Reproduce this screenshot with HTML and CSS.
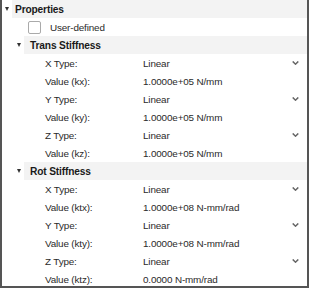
FILE: index.html
```html
<!DOCTYPE html>
<html lang="en">
<head>
    <meta charset="UTF-8">
    <title>Properties</title>
    <link rel="stylesheet" href="styles.css">
</head>
<body>
    <div class="panel">
        <div class="header level-0"><span class="caret"></span>Properties</div>
        <div class="row check-row"><span class="checkbox"></span>User-defined</div>

        <div class="header level-1"><span class="caret"></span>Trans Stiffness</div>
        <div class="row"><span class="label">X Type:</span><span class="value">Linear</span><svg class="chevron" viewBox="0 0 8 5"><path d="M0.5 0.5 L4 4 L7.5 0.5" /></svg></div>
        <div class="row"><span class="label">Value (kx):</span><span class="value">1.0000e+05 N/mm</span></div>
        <div class="row"><span class="label">Y Type:</span><span class="value">Linear</span><svg class="chevron" viewBox="0 0 8 5"><path d="M0.5 0.5 L4 4 L7.5 0.5" /></svg></div>
        <div class="row"><span class="label">Value (ky):</span><span class="value">1.0000e+05 N/mm</span></div>
        <div class="row"><span class="label">Z Type:</span><span class="value">Linear</span><svg class="chevron" viewBox="0 0 8 5"><path d="M0.5 0.5 L4 4 L7.5 0.5" /></svg></div>
        <div class="row"><span class="label">Value (kz):</span><span class="value">1.0000e+05 N/mm</span></div>

        <div class="header level-1"><span class="caret"></span>Rot Stiffness</div>
        <div class="row"><span class="label">X Type:</span><span class="value">Linear</span><svg class="chevron" viewBox="0 0 8 5"><path d="M0.5 0.5 L4 4 L7.5 0.5" /></svg></div>
        <div class="row"><span class="label">Value (ktx):</span><span class="value">1.0000e+08 N-mm/rad</span></div>
        <div class="row"><span class="label">Y Type:</span><span class="value">Linear</span><svg class="chevron" viewBox="0 0 8 5"><path d="M0.5 0.5 L4 4 L7.5 0.5" /></svg></div>
        <div class="row"><span class="label">Value (kty):</span><span class="value">1.0000e+08 N-mm/rad</span></div>
        <div class="row"><span class="label">Z Type:</span><span class="value">Linear</span><svg class="chevron" viewBox="0 0 8 5"><path d="M0.5 0.5 L4 4 L7.5 0.5" /></svg></div>
        <div class="row"><span class="label">Value (ktz):</span><span class="value">0.0000 N-mm/rad</span></div>
    </div>
</body>
</html>
```
FILE: styles.css
```css
body {
    margin: 0;
    font-family: "Liberation Sans", Arial, sans-serif;
    background-color: #fff;
}
.panel {
    box-sizing: border-box;
    width: 309px;
    height: 288px;
    border: 2px solid #555;
    border-top: none;
    overflow: hidden;
    color: #2a2a2a;
    font-size: 9.9px;
    letter-spacing: -0.15px;
}
.header,
.row {
    height: 18px;
    display: flex;
    align-items: center;
}
.header {
    position: relative;
    background-color: #f3f3f3;
    font-weight: bold;
    font-size: 10.2px;
    color: #1a1a1a;
}
.header.level-0 {
    margin-left: 10px;
    padding-left: 3px;
}
.header.level-1 {
    margin-left: 22px;
    padding-left: 6px;
}
.caret {
    position: absolute;
    left: -7px;
    top: 7px;
    width: 0;
    height: 0;
    border-left: 2.5px solid transparent;
    border-right: 2.5px solid transparent;
    border-top: 4px solid #333;
}
.check-row {
    padding-left: 26px;
}
.checkbox {
    box-sizing: border-box;
    width: 13px;
    height: 13px;
    border: 1px solid #aaa;
    border-radius: 2px;
    background-color: #fff;
    margin-right: 9px;
}
.label {
    width: 98px;
    padding-left: 43px;
    flex-shrink: 0;
}
.value {
    flex: 1;
}
.chevron {
    width: 7px;
    height: 4px;
    margin-right: 8px;
    fill: none;
    stroke: #666;
    stroke-width: 1.8;
}
```
